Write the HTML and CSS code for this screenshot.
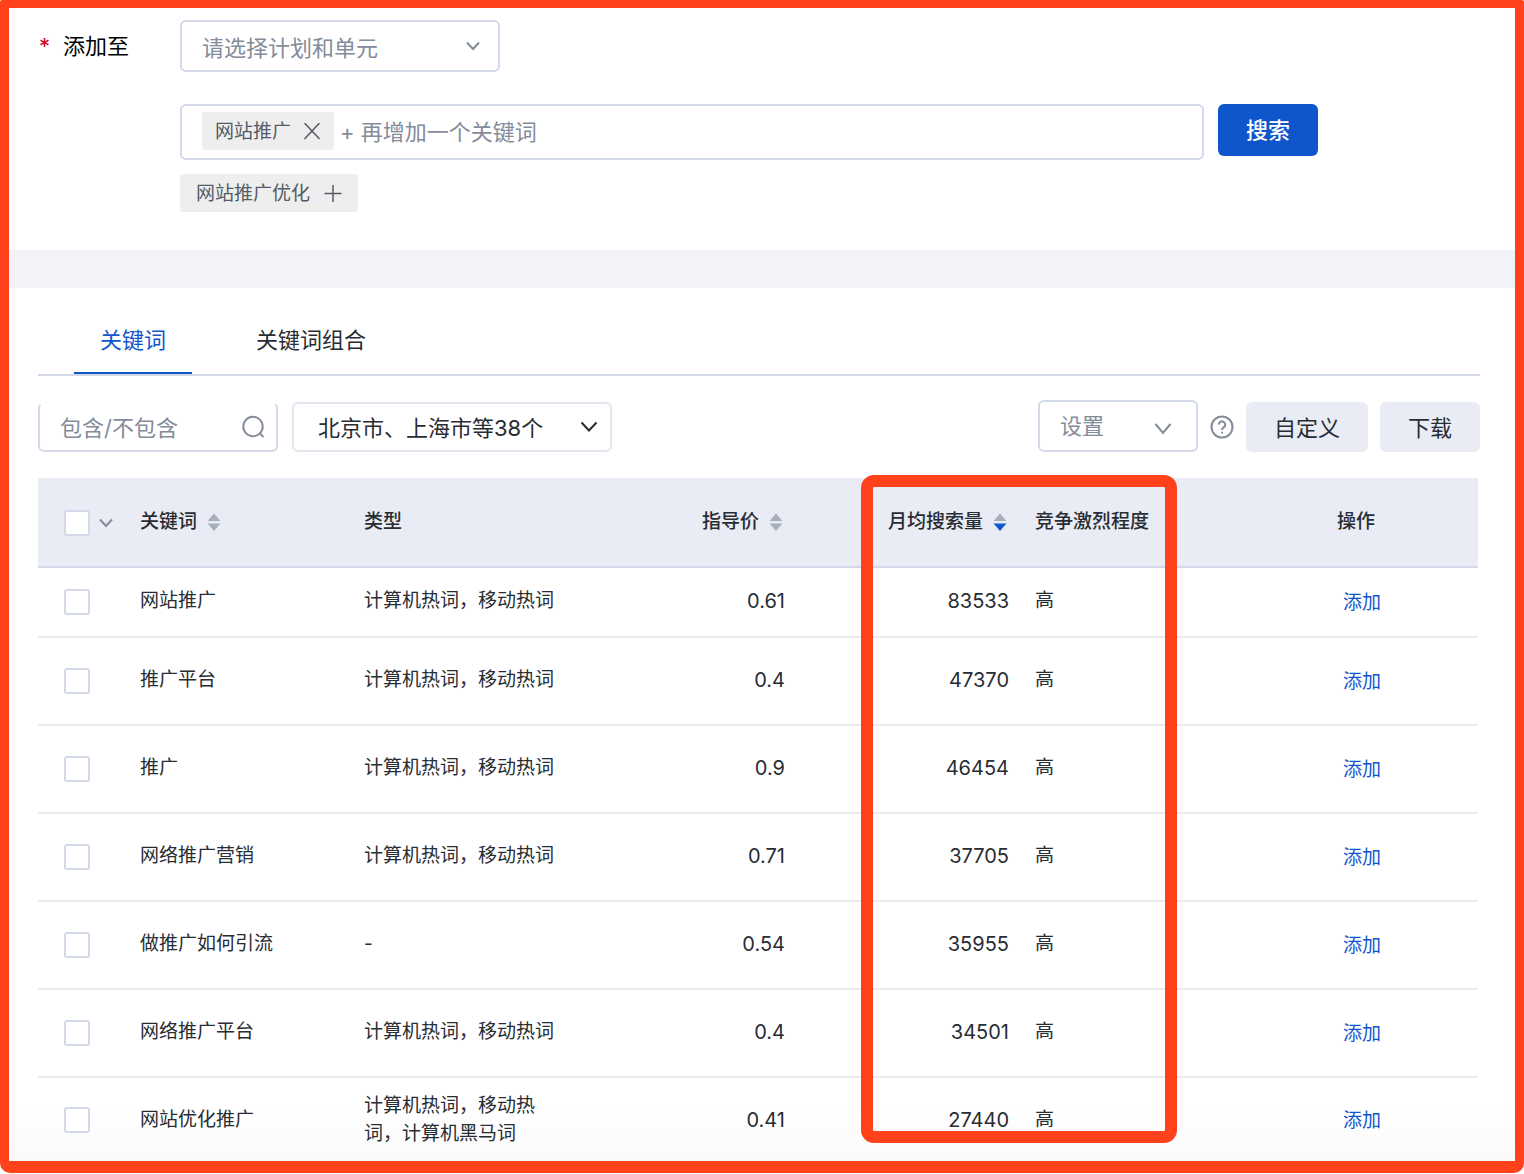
FILE: index.html
```html
<!DOCTYPE html>
<html lang="zh-CN">
<head>
<meta charset="utf-8">
<title>关键词规划</title>
<link rel="stylesheet" href="styles.css">
</head>
<body>
<main class="frame">
  <form class="query">
    <label class="query-label" for="unit"><span class="required">*</span>添加至</label>
    <div class="query-fields">
      <div class="select-wrap select-unit">
        <select id="unit" class="select muted"><option>请选择计划和单元</option></select>
        <svg class="chevron" width="14" height="10" viewBox="0 0 14 10"><path d="M1 1.500 7 8l6-6.500"/></svg>
      </div>
      <div class="search-row">
        <div class="keyword-box">
          <button type="button" class="tag">网站推广<svg class="tag-icon" width="18" height="18" viewBox="0 0 18 18"><path d="M1.500 0 16.500 16M16.500 0 1.500 16"/></svg></button>
          <input class="keyword-input" type="text" aria-label="关键词" placeholder="+ 再增加一个关键词">
        </div>
        <button type="submit" class="btn-primary">搜索</button>
      </div>
      <button type="button" class="tag tag-suggest">网站推广优化<svg class="tag-icon" width="18" height="18" viewBox="0 0 18 18"><path d="M9 0V17M0.500 8.500H17.500"/></svg></button>
    </div>
  </form>

  <section class="results">
    <nav class="tabs">
      <a href="#words" class="tab active">关键词</a>
      <a href="#groups" class="tab">关键词组合</a>
    </nav>

    <div class="toolbar">
      <div class="filter-box">
        <input class="filter-input" type="text" aria-label="包含/不包含" placeholder="包含/不包含">
        <svg class="search-icon" width="24" height="24" viewBox="0 0 24 24"><circle cx="12" cy="11.500" r="9.700"/><path d="m19 18.500 3.500 3.500"/></svg>
      </div>
      <div class="select-wrap select-region">
        <select class="select" aria-label="地域"><option>北京市、上海市等38个</option></select>
        <svg class="chevron" width="18" height="12" viewBox="0 0 18 12"><path d="m1.500 1.500 7.500 8 7.500-8"/></svg>
      </div>
      <div class="toolbar-end">
        <div class="select-wrap select-setting">
          <select class="select muted" aria-label="设置"><option>设置</option></select>
          <svg class="chevron" width="18" height="12" viewBox="0 0 18 12"><path d="m1.500 1 7.500 9 7.500-9"/></svg>
        </div>
        <button type="button" class="help" aria-label="帮助"><svg width="24" height="24" viewBox="0 0 24 24"><circle cx="12" cy="12" r="10.500"/><path d="M8.800 9.600a3.200 3.200 0 1 1 4.900 2.700c-1.100.7-1.700 1.200-1.700 2.200v.5"/><path d="M12 16.800v1.700"/></svg></button>
        <button type="button" class="btn">自定义</button>
        <button type="button" class="btn">下载</button>
      </div>
    </div>

    <div class="table-wrap">
      <table class="table">
        <colgroup><col class="c-check"><col class="c-word"><col class="c-type"><col class="c-price"><col class="c-volume"><col class="c-level"><col></colgroup>
        <thead>
          <tr>
            <th class="check"><div class="check-head"><input type="checkbox" class="box" aria-label="全选"><button type="button" class="more" aria-label="更多"><svg width="14" height="10" viewBox="0 0 14 10"><path d="M1 1.500 7 8l6-6.500"/></svg></button></div></th>
            <th>关键词<svg class="sort" width="14" height="18" viewBox="0 0 14 18"><path d="M7 0.500 13.500 8H0.500z"/><path d="M0.500 10.500h13L7 18z"/></svg></th>
            <th>类型</th>
            <th class="num">指导价<svg class="sort" width="14" height="18" viewBox="0 0 14 18"><path d="M7 0.500 13.500 8H0.500z"/><path d="M0.500 10.500h13L7 18z"/></svg></th>
            <th class="num">月均搜索量<svg class="sort" width="14" height="18" viewBox="0 0 14 18"><path d="M7 0.500 13.500 8H0.500z"/><path class="on" d="M0.500 10.500h13L7 18z"/></svg></th>
            <th class="level">竞争激烈程度</th>
            <th>操作</th>
          </tr>
        </thead>
        <tbody>
          <tr><td class="check"><input type="checkbox" class="box" aria-label="网站推广"></td><td>网站推广</td><td>计算机热词，移动热词</td><td class="num">0.61</td><td class="num">83533</td><td class="level">高</td><td class="action"><a href="#add">添加</a></td></tr>
          <tr><td class="check"><input type="checkbox" class="box" aria-label="推广平台"></td><td>推广平台</td><td>计算机热词，移动热词</td><td class="num">0.4</td><td class="num">47370</td><td class="level">高</td><td class="action"><a href="#add">添加</a></td></tr>
          <tr><td class="check"><input type="checkbox" class="box" aria-label="推广"></td><td>推广</td><td>计算机热词，移动热词</td><td class="num">0.9</td><td class="num">46454</td><td class="level">高</td><td class="action"><a href="#add">添加</a></td></tr>
          <tr><td class="check"><input type="checkbox" class="box" aria-label="网络推广营销"></td><td>网络推广营销</td><td>计算机热词，移动热词</td><td class="num">0.71</td><td class="num">37705</td><td class="level">高</td><td class="action"><a href="#add">添加</a></td></tr>
          <tr><td class="check"><input type="checkbox" class="box" aria-label="做推广如何引流"></td><td>做推广如何引流</td><td>-</td><td class="num">0.54</td><td class="num">35955</td><td class="level">高</td><td class="action"><a href="#add">添加</a></td></tr>
          <tr><td class="check"><input type="checkbox" class="box" aria-label="网络推广平台"></td><td>网络推广平台</td><td>计算机热词，移动热词</td><td class="num">0.4</td><td class="num">34501</td><td class="level">高</td><td class="action"><a href="#add">添加</a></td></tr>
          <tr><td class="check"><input type="checkbox" class="box" aria-label="网站优化推广"></td><td>网站优化推广</td><td>计算机热词，移动热词，计算机黑马词</td><td class="num">0.41</td><td class="num">27440</td><td class="level">高</td><td class="action"><a href="#add">添加</a></td></tr>
        </tbody>
      </table>
      <div class="highlight"></div>
    </div>
  </section>
</main>
</body>
</html>
```

FILE: styles.css
```css
* {
  box-sizing: border-box;
}

body {
  margin: 0;
  background: #fff;
  color: #282c33;
  font-family: Inter, "Noto Sans CJK SC", sans-serif;
  font-size: 22px;
  line-height: 28px;
}

button,
input,
select {
  margin: 0;
  color: inherit;
  font: inherit;
}

button {
  border: 0;
  padding: 0;
  cursor: pointer;
}

a {
  color: #0f56cd;
  text-decoration: none;
}

svg {
  display: block;
  fill: none;
  stroke: currentColor;
  stroke-width: 2;
}

.frame {
  border: solid #ff411c;
  border-width: 8px 9px 12px;
  border-radius: 2px 2px 10px 10px;
}

/* Query form */
.query {
  display: flex;
  padding: 12px 30px 38px;
  border-bottom: 38px solid #f2f3f8;
}

.query-label {
  display: flex;
  align-items: center;
  flex: none;
  width: 141px;
  height: 52px;
  color: #000;
}

.required {
  width: 24px;
  color: #d0021b;
  font-size: 22px;
}

.query-fields {
  flex: 1;
  display: flex;
  flex-direction: column;
  align-items: flex-start;
}

.select-wrap {
  position: relative;
}

.select {
  display: block;
  width: 100%;
  height: 52px;
  padding: 0 20px;
  border: 2px solid #d3d9e8;
  border-radius: 6px;
  background: #fff;
  appearance: none;
}

.muted {
  color: #848b99;
}

.chevron {
  position: absolute;
  top: 50%;
  right: 20px;
  transform: translateY(-50%);
  pointer-events: none;
}

.select-unit {
  width: 320px;
  margin-bottom: 32px;
}

.select-unit .select {
  padding-top: 4px;
}

.select-unit .chevron,
.select-setting .chevron {
  color: #848b99;
}

.search-row {
  display: flex;
  gap: 14px;
  width: 100%;
  max-width: 1138px;
  margin-bottom: 14px;
}

.keyword-box {
  flex: 1;
  display: flex;
  gap: 6px;
  height: 56px;
  padding: 6px 20px;
  border: 2px solid #d3d9e8;
  border-radius: 6px;
}

.keyword-input {
  flex: 1;
  height: 40px;
  padding: 0;
  border: 0;
  background: none;
  outline: none;
}

::placeholder {
  color: #848b99;
  opacity: 1;
}

.tag {
  display: flex;
  align-items: center;
  gap: 12px;
  height: 38px;
  padding: 2px 13px 0;
  border-radius: 3px;
  background: #eee;
  color: #545b66;
  font-size: 19px;
}

.tag-icon {
  stroke-width: 1.5;
}

.tag-suggest {
  gap: 14px;
  padding: 2px 16px 0;
}

.btn-primary {
  width: 100px;
  height: 52px;
  border-radius: 6px;
  background: #0f56cd;
  color: #fff;
  font-weight: 500;
}

/* Results */
.results {
  padding: 24px 35px 0 29px;
  background: linear-gradient(#fff 94%, #fafafa);
}

.tabs {
  display: flex;
  gap: 38px;
  padding-left: 36px;
  border-bottom: 2px solid #d3d9e8;
}

.tab {
  height: 62px;
  padding: 14px 26px;
  color: #282c33;
}

.tab.active {
  border-bottom: 2px solid #0f56cd;
  color: #0f56cd;
}

.toolbar {
  display: flex;
  align-items: flex-end;
  gap: 14px;
  margin: 24px 0 26px;
}

.filter-box {
  display: flex;
  align-items: center;
  width: 240px;
  height: 50px;
  padding: 0 11px 0 20px;
  border: 2px solid #d3d9e8;
  border-top-color: #fff;
  border-radius: 6px;
}

.filter-input {
  flex: 1;
  min-width: 0;
  padding: 2px 0 0;
  border: 0;
  background: none;
  outline: none;
}

.search-icon {
  color: #848b99;
}

.select-region {
  width: 320px;
}

.select-region .select {
  height: 50px;
  padding: 2px 24px 0;
  border-color: #e2e6f0;
}

.select-region .chevron {
  right: 14px;
}

.toolbar-end {
  display: flex;
  align-items: flex-end;
  gap: 12px;
  margin-left: auto;
}

.select-setting {
  width: 160px;
}

.select-setting .chevron {
  top: 55%;
  right: 26px;
}

.help {
  display: flex;
  align-items: center;
  height: 50px;
  background: none;
  color: #848b99;
}

.btn {
  height: 50px;
  padding: 2px 28px 0;
  border-radius: 6px;
  background: #e9ecf5;
}

/* Keyword table */
.table-wrap {
  position: relative;
  margin-right: 2px;
}

.table {
  width: 100%;
  border-collapse: separate;
  border-spacing: 0;
  table-layout: fixed;
  font-size: 19px;
}

.c-check {
  width: 90px;
}

.c-word,
.c-type,
.c-volume {
  width: 224px;
}

.c-price {
  width: 221px;
}

.c-level {
  width: 304px;
}

th,
td {
  padding: 0 12px 2px;
  text-align: left;
  vertical-align: middle;
}

th {
  height: 90px;
  padding-bottom: 0;
  border-bottom: 2px solid #d3d9e8;
  background: #e9ecf5;
  font-weight: 500;
}

td {
  height: 88px;
  border-bottom: 2px solid #e9ecf3;
}

tbody tr:first-child td {
  height: 70px;
}

tbody tr:last-child td {
  height: 83px;
  padding-bottom: 0;
  border-bottom: 0;
}

.num {
  text-align: right;
}

td.num {
  font-size: 20px;
}

.level {
  padding-left: 14px;
}

.check {
  padding: 0 0 0 26px;
}

th.check {
  padding-top: 2px;
}

.action {
  padding: 2px 18px 0;
}

.check-head {
  display: flex;
  align-items: center;
  gap: 9px;
}

.box {
  display: block;
  width: 26px;
  height: 26px;
  margin: 0;
  border: 2px solid #d3d9e8;
  border-radius: 3px;
  background: #fff;
  appearance: none;
}

.more {
  background: none;
  color: #848b99;
}

.sort {
  display: inline-block;
  margin-left: 10px;
  vertical-align: -3px;
  fill: #a8b0c0;
  stroke: none;
}

.num .sort {
  margin-right: 2px;
}

.sort .on {
  fill: #0f56cd;
}

/* Frame laid over the volume and competition columns */
.highlight {
  position: absolute;
  top: -3px;
  bottom: 18px;
  left: 823px;
  width: 316px;
  border: 12px solid #ff411c;
  border-radius: 13px;
  pointer-events: none;
}
```
